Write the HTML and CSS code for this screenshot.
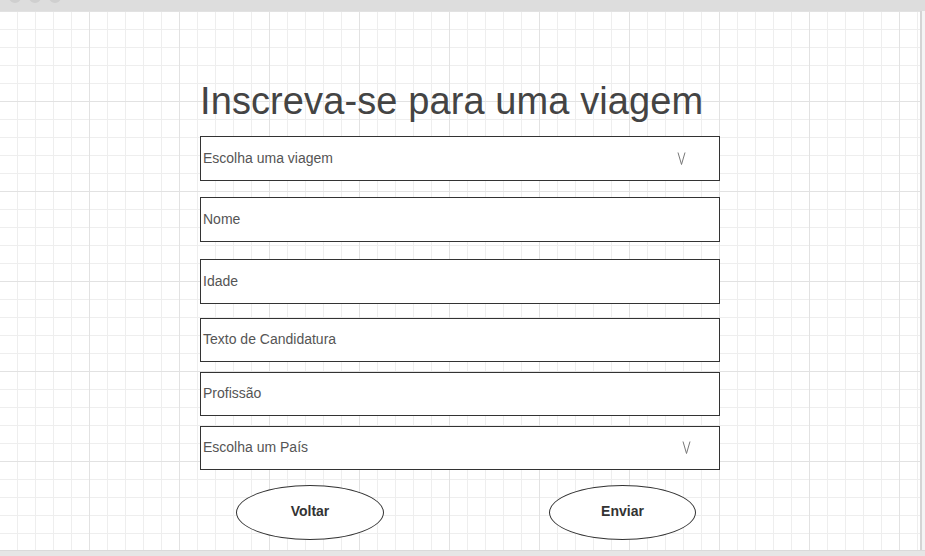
FILE: index.html
```html
<!DOCTYPE html>
<html lang="pt">
<head>
<meta charset="utf-8">
<title>Inscreva-se para uma viagem</title>
<link rel="stylesheet" href="styles.css">
</head>
<body>
<div class="app">
  <div class="topbar">
    <span class="dot"></span><span class="dot"></span><span class="dot"></span>
  </div>
  <div class="middle">
    <main class="canvas">
      <div class="form">
        <h1 class="title">Inscreva-se para uma viagem</h1>
        <div class="field tall select sel-a">
          <span>Escolha uma viagem</span>
          <svg class="chev" width="9" height="13" viewBox="0 0 9 13"><polyline points="1,0.5 4.5,12.5 8,0.5" fill="none" stroke="#777" stroke-width="1"/></svg>
        </div>
        <div class="field tall g16"><span>Nome</span></div>
        <div class="field tall g17"><span>Idade</span></div>
        <div class="field g14"><span>Texto de Candidatura</span></div>
        <div class="field g10"><span>Profissão</span></div>
        <div class="field g10 select sel-b">
          <span>Escolha um País</span>
          <svg class="chev" width="9" height="13" viewBox="0 0 9 13"><polyline points="1,0.5 4.5,12.5 8,0.5" fill="none" stroke="#777" stroke-width="1"/></svg>
        </div>
        <div class="buttons">
          <div class="btn btn-back">Voltar</div>
          <div class="btn btn-send">Enviar</div>
        </div>
      </div>
    </main>
    <div class="edge"></div>
  </div>
  <div class="bottombar"></div>
</div>
</body>
</html>
```
FILE: styles.css
```css
html, body {
  margin: 0;
  padding: 0;
  background: #fff;
}
body {
  font-family: "Liberation Sans", Arial, sans-serif;
}
.app {
  width: 925px;
  height: 556px;
  display: flex;
  flex-direction: column;
  overflow: hidden;
}
.topbar {
  height: 11px;
  flex: 0 0 11px;
  background: #dddddd;
  display: flex;
  gap: 8px;
  padding-left: 9px;
  overflow: hidden;
}
.dot {
  width: 12px;
  height: 12px;
  margin-top: -9px;
  border-radius: 50%;
  background: #cfcfcf;
}
.middle {
  flex: 1;
  display: flex;
}
.canvas {
  width: 920px;
  border-right: 2px solid #d4d4d4;
  background-color: #fff;
  background-image:
    linear-gradient(to right, #e2e2e2 1px, transparent 1px),
    linear-gradient(to bottom, #e2e2e2 1px, transparent 1px),
    linear-gradient(to right, #eeeeee 1px, transparent 1px),
    linear-gradient(to bottom, #eeeeee 1px, transparent 1px);
  background-size: 90px 90px, 90px 90px, 18px 18px, 18px 18px;
  background-position: 89px 0, 0 0, 17px 0, 0 0;
}
.edge {
  flex: 1;
  background: #f4f4f4;
}
.bottombar {
  height: 5px;
  flex: 0 0 5px;
  background: #e6e6e6;
  border-top: 1px solid #dadada;
}
.form {
  width: 520px;
  margin-left: 200px;
  padding-top: 68px;
  display: flex;
  flex-direction: column;
}
.title {
  margin: 0 0 13px 0;
  font-size: 38px;
  line-height: 44px;
  font-weight: normal;
  color: #444;
  white-space: nowrap;
  letter-spacing: 0.1px;
}
.field {
  box-sizing: border-box;
  height: 44px;
  border: 1px solid #333;
  background: #fff;
  display: flex;
  align-items: center;
  padding-left: 2px;
  padding-bottom: 2px;
  font-size: 14px;
  color: #555;
}
.field.tall { height: 45px; }
.g16 { margin-top: 16px; }
.g17 { margin-top: 17px; }
.g14 { margin-top: 14px; }
.g10 { margin-top: 10px; }
.select { justify-content: space-between; }
.sel-a { padding-right: 33px; }
.sel-b { padding-right: 28px; }
.chev { display: block; margin-top: 1px; }
.buttons {
  margin-top: 15px;
  display: flex;
  justify-content: space-between;
  padding-left: 36px;
  padding-right: 24px;
}
.btn {
  box-sizing: border-box;
  width: 148px;
  height: 55px;
  border: 1px solid #333;
  border-radius: 50%;
  background: #fff;
  display: flex;
  align-items: center;
  justify-content: center;
  padding-bottom: 3px;
  font-size: 14px;
  font-weight: bold;
  color: #333;
}
.btn-send { width: 147px; }
```
